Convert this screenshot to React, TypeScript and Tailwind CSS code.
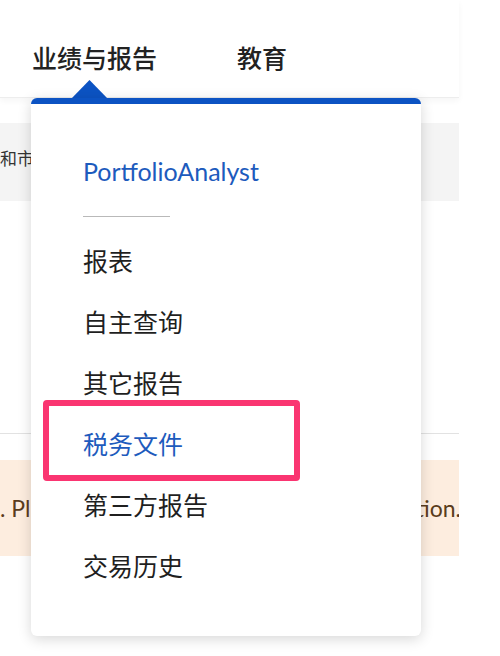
import React from "react";

const cjk = '"Lato", "Noto Sans CJK SC", sans-serif';

export default function App() {
  const items = ["报表", "自主查询", "其它报告", "税务文件", "第三方报告", "交易历史"];
  return (
    <div
      className="relative w-[500px] h-[656px] overflow-hidden bg-white"
      style={{ fontFamily: cjk }}
    >
      <div className="w-[459px]">
        {/* header */}
        <div className="h-[98px] flex items-start pt-[46px] pl-[32px] gap-[80px] border-b border-[#ededed] shadow-[0_3px_6px_rgba(0,0,0,0.04)] bg-white">
          <span className="text-[25px] leading-[25px] font-medium text-[#222]">业绩与报告</span>
          <span className="text-[25px] leading-[25px] font-medium text-[#222]">教育</span>
        </div>
        <div className="h-[25px]" />
        {/* gray band */}
        <div className="h-[78px] bg-[#f4f4f4] flex items-center pb-[6px] overflow-hidden">
          <span className="text-[17px] text-[#333] whitespace-nowrap">和市场</span>
        </div>
        <div className="h-[232px]" />
        <div className="border-t border-[#e2e2e2]" />
        <div className="h-[26px]" />
        {/* orange band */}
        <div className="h-[96px] bg-[#fdeddf] flex items-center justify-between overflow-hidden text-[23px] text-[#5a3c1c] whitespace-nowrap">
          <span className="shrink-0">. Pl</span>
          <span className="shrink-0 mr-[-2px]">information.</span>
        </div>
      </div>

      {/* dropdown arrow */}
      <svg
        className="absolute left-[71px] top-[80px]"
        width="37"
        height="19"
        viewBox="0 0 37 19"
      >
        <polygon points="18.5,0 37,19 0,19" fill="#0c53c3" />
      </svg>

      {/* dropdown */}
      <div className="absolute left-[31px] top-[98px] w-[390px] h-[538px] bg-white rounded-[6px] border-t-[6px] border-[#0c53c3] shadow-[0_3px_14px_rgba(0,0,0,0.16)]">
        <div className="pt-[37px] pl-[52px]">
          <div className="h-[61px] flex items-center text-[25px] text-[#1d5bbd]">
            PortfolioAnalyst
          </div>
          <div className="mt-[14px] w-[87px] border-t border-[#b9b9b9]" />
          <div className="mt-[14px]">
            {items.map((t) => (
              <div
                key={t}
                className={
                  t === "税务文件"
                    ? "h-[61px] flex items-center text-[25px] text-[#1d5bbd]"
                    : "h-[61px] flex items-center text-[25px] text-[#1f1f1f]"
                }
              >
                {t}
              </div>
            ))}
          </div>
        </div>
      </div>

      {/* annotation highlight */}
      <div className="absolute left-[43px] top-[400px] w-[257px] h-[81px] border-[6px] border-[#fa3571] rounded-[4px]" />
    </div>
  );
}
